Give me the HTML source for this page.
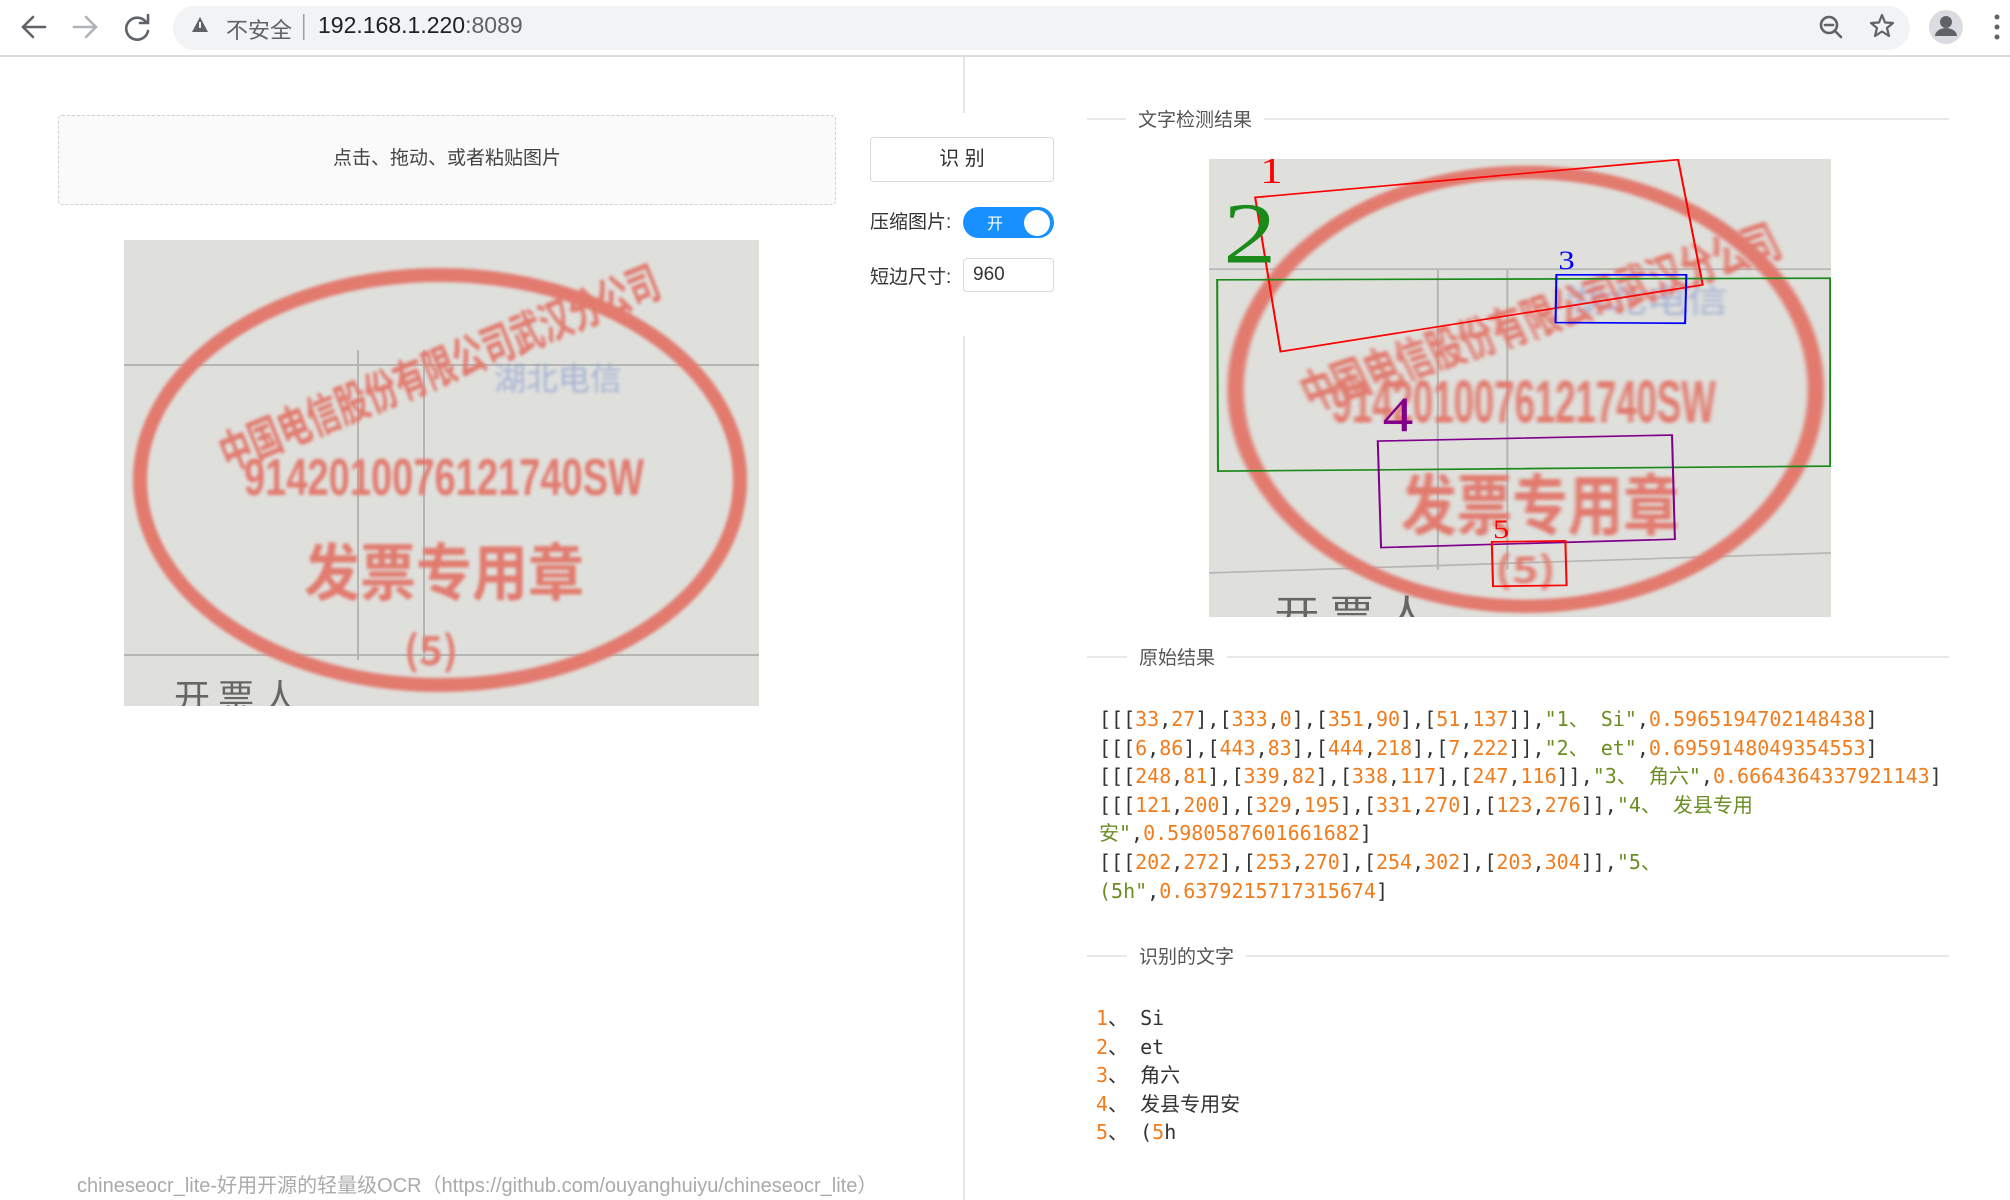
<!DOCTYPE html>
<html><head><meta charset="utf-8"><style>
*{margin:0;padding:0;box-sizing:border-box}
body{width:2010px;height:1200px;overflow:hidden;background:#fff;font-family:"Liberation Sans","Noto Sans CJK SC",sans-serif;color:#333;position:relative}
.a{position:absolute}
.top{left:0;top:0;width:2010px;height:57px;background:#fff;border-bottom:2px solid #dadce0}
.addr{left:173px;top:6px;width:1737px;height:44px;border-radius:22px;background:#f1f3f4}
.code{font-family:"DejaVu Sans Mono","Noto Sans CJK SC",monospace;font-size:20px;line-height:28.6px;white-space:pre;color:#333}
.n{color:#f07c1c}.s{color:#6b8e23}
.ttl{font-size:19px;color:#555;background:#fff;padding:0 12px}
.hl{height:2px;background:#e8e8e8}
</style></head><body>
<div class="a top"></div>
<div class="a addr"></div>
<svg class="a" style="left:0;top:0" width="2010" height="56">
<g fill="none" stroke="#5f6368" stroke-width="2.6" stroke-linecap="round">
<path d="M45 27H24M33 17l-10 10 10 10"/>
<path d="M74 27h21M86 17l10 10-10 10" stroke="#b0b3b7"/>
<path d="M146 22a11 11 0 1 0 2 9"/><path d="M148 15v8h-8"/>
<circle cx="1829" cy="25" r="8"/><path d="M1835 31l6 6M1825 25h8"/>
<path d="M1882 15l3 7.5 8 .5-6 5 2 8-7-4.5-7 4.5 2-8-6-5 8-.5z" stroke-width="2.2" stroke-linejoin="round"/>
</g>
<path d="M200 17l-8 15h16z" fill="#5f6368"/><rect x="199" y="22" width="2" height="6" fill="#f1f3f4"/>
<rect x="303" y="14" width="1.5" height="26" fill="#9aa0a6"/>
<circle cx="1946" cy="27" r="17" fill="#dadce0"/><circle cx="1946" cy="22" r="6" fill="#5f6368"/><path d="M1935 36a11 8 0 0 1 22 0z" fill="#5f6368"/>
<circle cx="1997" cy="17" r="2.5" fill="#5f6368"/><circle cx="1997" cy="27" r="2.5" fill="#5f6368"/><circle cx="1997" cy="37" r="2.5" fill="#5f6368"/>
</svg>
<div class="a" style="left:226px;top:13px;font-size:22px;color:#5f6368">不安全</div>
<div class="a" style="left:318px;top:12px;font-size:23px;color:#202124">192.168.1.220<span style="color:#5f6368">:8089</span></div>

<div class="a" style="left:963px;top:57px;width:1.5px;height:56px;background:#e6e6e6"></div>
<div class="a" style="left:963px;top:336px;width:1.5px;height:864px;background:#e6e6e6"></div>

<div class="a" style="left:58px;top:115px;width:778px;height:90px;border:1.5px dashed #d0d0d0;border-radius:4px;background:#fafafa;text-align:center;line-height:86px;font-size:19px;color:#444">点击、拖动、或者粘贴图片</div>

<svg class="a" style="left:124px;top:240px" width="635" height="466" viewBox="0 0 635 466">
<defs><filter id="b"><feGaussianBlur stdDeviation="1.6"/></filter></defs>
<rect width="635" height="466" fill="#dfe0dc"/>
<path d="M0 125H635M0 415H635M234 110V420M300 110V420" stroke="#999" stroke-width="2" fill="none" opacity=".6"/>
<g filter="url(#b)" fill="#e27a6e">
<ellipse cx="316" cy="240" rx="300" ry="205" fill="none" stroke="#e27a6e" stroke-width="14"/>
<text x="370" y="150" font-size="32" fill="#8d9fd0" opacity=".7" font-family="Noto Sans CJK SC">湖北电信</text>
<text x="120" y="255" font-size="52" font-weight="bold" font-family="Liberation Sans" textLength="400" lengthAdjust="spacingAndGlyphs">9142010076121740SW</text>
<text x="85" y="145" font-size="46" font-weight="bold" font-family="Noto Sans CJK SC" transform="rotate(-22 316 140)" textLength="470" lengthAdjust="spacingAndGlyphs">中国电信股份有限公司武汉分公司</text>
<text x="180" y="355" font-size="62" font-weight="bold" font-family="Noto Sans CJK SC" textLength="280" lengthAdjust="spacingAndGlyphs">发票专用章</text>
<text x="280" y="425" font-size="40" font-weight="bold" font-family="Noto Sans CJK SC">(5)</text>
</g>
<text x="50" y="470" font-size="36" fill="#666" font-family="Noto Sans CJK SC">开 票 人</text>
</svg>

<div class="a" style="left:870px;top:137px;width:184px;height:45px;border:1.5px solid #d9d9d9;border-radius:4px;text-align:center;line-height:42px;font-size:20px;color:#333">识 别</div>
<div class="a" style="left:870px;top:207px;font-size:19px;color:#333">压缩图片:</div>
<div class="a" style="left:963px;top:207px;width:91px;height:31px;border-radius:16px;background:#1890ff"></div>
<div class="a" style="left:987px;top:210px;font-size:16px;color:#fff">开</div>
<div class="a" style="left:1024px;top:210px;width:26px;height:26px;border-radius:50%;background:#fff"></div>
<div class="a" style="left:870px;top:262px;font-size:19px;color:#333">短边尺寸:</div>
<div class="a" style="left:963px;top:258px;width:91px;height:34px;border:1.5px solid #d9d9d9;border-radius:4px;font-size:19px;line-height:31px;padding-left:9px;color:#333">960</div>

<div class="a hl" style="left:1087px;top:118px;width:862px"></div>
<div class="a ttl" style="left:1126px;top:105px">文字检测结果</div>
<svg class="a" style="left:1209px;top:159px" width="622" height="458" viewBox="0 0 1522 1372" preserveAspectRatio="none">
<defs><filter id="c"><feGaussianBlur stdDeviation="5"/></filter></defs>
<rect width="1522" height="1372" fill="#dfe0dc"/>
<path d="M0 330H1522M0 1240L1522 1180M560 330V1230M730 330V1230" stroke="#999" stroke-width="5" fill="none" opacity=".6"/>
<g filter="url(#c)" fill="#e27a6e">
<ellipse cx="775" cy="690" rx="710" ry="650" fill="none" stroke="#e27a6e" stroke-width="40"/>
<text x="870" y="460" font-size="100" fill="#8d9fd0" opacity=".7" font-family="Noto Sans CJK SC">湖北电信</text>
<text x="300" y="790" font-size="180" font-weight="bold" font-family="Liberation Sans" textLength="940" lengthAdjust="spacingAndGlyphs">9142010076121740SW</text>
<text x="150" y="560" font-size="140" font-weight="bold" font-family="Noto Sans CJK SC" transform="rotate(-22 700 400)" textLength="1250" lengthAdjust="spacingAndGlyphs">中国电信股份有限公司武汉分公司</text>
<text x="470" y="1110" font-size="200" font-weight="bold" font-family="Noto Sans CJK SC" textLength="680" lengthAdjust="spacingAndGlyphs">发票专用章</text>
<text x="700" y="1270" font-size="110" font-weight="bold" font-family="Noto Sans CJK SC">(5)</text>
</g>
<text x="160" y="1400" font-size="110" fill="#666" font-family="Noto Sans CJK SC">开 票 人</text>
<g fill="none" stroke-width="5">
<path d="M113 115L1148 2L1208 377L175 577Z" stroke="#f00"/>
<path d="M20 362L1520 357L1520 920L22 935Z" stroke="#1a8a1a"/>
<path d="M850 347L1168 347L1165 492L848 490Z" stroke="#00f"/>
<path d="M413 845L1133 827L1140 1139L421 1164Z" stroke="#80008b"/>
<path d="M692 1147L872 1144L875 1277L695 1280Z" stroke="#f00"/>
</g>
<g font-family="Liberation Serif">
<text x="125" y="72" font-size="110" fill="#f00">1</text>
<text x="35" y="310" font-size="260" fill="#1a8a1a">2</text>
<text x="855" y="330" font-size="80" fill="#00f">3</text>
<text x="425" y="815" font-size="150" fill="#80008b">4</text>
<text x="695" y="1135" font-size="80" fill="#f00">5</text>
</g>
</svg>

<div class="a hl" style="left:1087px;top:656px;width:862px"></div>
<div class="a ttl" style="left:1127px;top:643px">原始结果</div>
<div class="a code" style="left:1099px;top:705px">[[[<span class="n">33</span>,<span class="n">27</span>],[<span class="n">333</span>,<span class="n">0</span>],[<span class="n">351</span>,<span class="n">90</span>],[<span class="n">51</span>,<span class="n">137</span>]],<span class="s">"1、 Si"</span>,<span class="n">0.5965194702148438</span>]
[[[<span class="n">6</span>,<span class="n">86</span>],[<span class="n">443</span>,<span class="n">83</span>],[<span class="n">444</span>,<span class="n">218</span>],[<span class="n">7</span>,<span class="n">222</span>]],<span class="s">"2、 et"</span>,<span class="n">0.6959148049354553</span>]
[[[<span class="n">248</span>,<span class="n">81</span>],[<span class="n">339</span>,<span class="n">82</span>],[<span class="n">338</span>,<span class="n">117</span>],[<span class="n">247</span>,<span class="n">116</span>]],<span class="s">"3、 角六"</span>,<span class="n">0.6664364337921143</span>]
[[[<span class="n">121</span>,<span class="n">200</span>],[<span class="n">329</span>,<span class="n">195</span>],[<span class="n">331</span>,<span class="n">270</span>],[<span class="n">123</span>,<span class="n">276</span>]],<span class="s">"4、 发县专用</span>
<span class="s">安"</span>,<span class="n">0.5980587601661682</span>]
[[[<span class="n">202</span>,<span class="n">272</span>],[<span class="n">253</span>,<span class="n">270</span>],[<span class="n">254</span>,<span class="n">302</span>],[<span class="n">203</span>,<span class="n">304</span>]],<span class="s">"5、</span>
<span class="s">(5h"</span>,<span class="n">0.6379215717315674</span>]</div>

<div class="a hl" style="left:1087px;top:955px;width:862px"></div>
<div class="a ttl" style="left:1127px;top:942px">识别的文字</div>
<div class="a code" style="left:1096px;top:1004px"><span class="n">1</span>、 Si
<span class="n">2</span>、 et
<span class="n">3</span>、 角六
<span class="n">4</span>、 发县专用安
<span class="n">5</span>、 (<span class="n">5</span>h</div>

<div class="a" style="left:77px;top:1169px;font-size:20px;color:#aaa">chineseocr_lite-好用开源的轻量级OCR（https://github.com/ouyanghuiyu/chineseocr_lite）</div>
</body></html>
